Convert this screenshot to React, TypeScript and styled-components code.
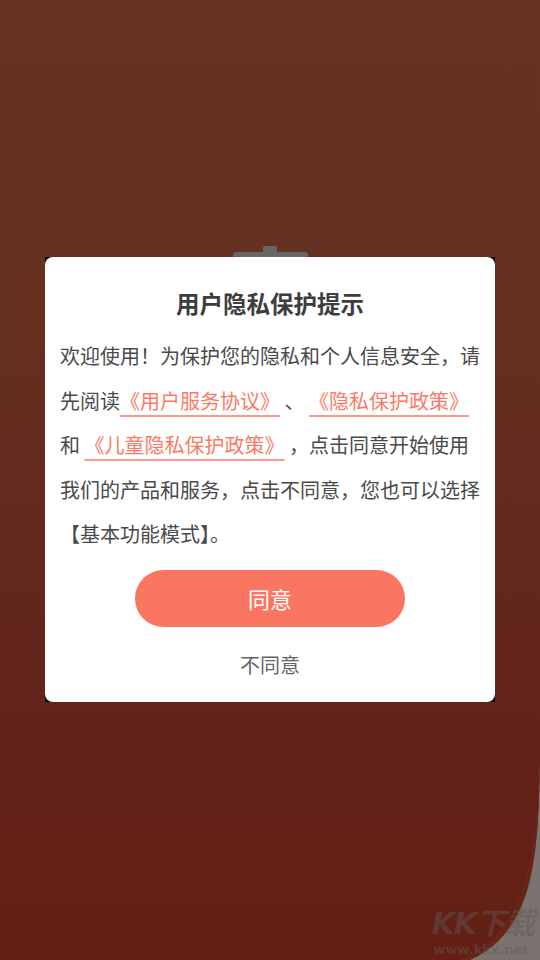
import React from "react";
import styled, { createGlobalStyle } from "styled-components";

const Global = createGlobalStyle`
  html, body { margin: 0; padding: 0; }
  body {
    width: 540px;
    height: 960px;
    overflow: hidden;
    font-family: "Noto Sans CJK SC", "Noto Sans", sans-serif;
  }
`;

const Page = styled.div`
  position: relative;
  width: 540px;
  height: 960px;
  box-sizing: border-box;
  padding-top: 257px;
  background: linear-gradient(180deg, #653222 0%, #643020 35%, #63241a 70%, #631f14 100%);
  overflow: hidden;
`;

const DialogWrap = styled.div`
  position: relative;
  margin: 0 45px;
  width: 450px;
`;

const Tab = styled.div`
  position: absolute;
  left: 188px;
  top: -5px;
  width: 75px;
  height: 10px;
  border-radius: 3px 3px 0 0;
  background: #666666;
  &::before {
    content: "";
    position: absolute;
    left: 30px;
    top: -6px;
    width: 14px;
    height: 8px;
    border-radius: 2px 2px 0 0;
    background: #666666;
  }
`;

const DialogFrame = styled.div`
  position: relative;
  background: #000;
`;

const Dialog = styled.div`
  background: #ffffff;
  border-radius: 8px;
  padding: 30px 15px 22px;
  display: flex;
  flex-direction: column;
  align-items: center;
`;

const Title = styled.h1`
  margin: 0;
  font-size: 23.5px;
  line-height: 32px;
  font-weight: 700;
  color: #3d3d3d;
  text-align: center;
`;

const Body = styled.p`
  margin: 15px 0 0;
  width: 420px;
  font-size: 20px;
  line-height: 44.5px;
  color: #4a4a4a;
  text-align: left;
  word-break: break-all;
`;

const Link = styled.a`
  color: #fb7a66;
  text-decoration: underline;
  text-decoration-color: #fb9a8a;
  text-decoration-thickness: 2px;
  text-underline-offset: 6px;
  cursor: pointer;
`;

const AgreeButton = styled.button`
  margin-top: 13px;
  width: 270px;
  height: 57px;
  border: none;
  border-radius: 28.5px;
  background: #fb7661;
  color: #ffffff;
  font-family: "Noto Sans CJK SC", "Noto Sans", sans-serif;
  font-size: 22px;
  display: flex;
  align-items: center;
  justify-content: center;
  cursor: pointer;
`;

const DisagreeButton = styled.button`
  margin-top: 23px;
  border: none;
  background: transparent;
  padding: 0;
  color: #666666;
  font-family: "Noto Sans CJK SC", "Noto Sans", sans-serif;
  font-size: 20px;
  line-height: 30px;
  cursor: pointer;
`;

const Curl = styled.svg`
  position: absolute;
  right: 0;
  bottom: 0;
  width: 120px;
  height: 220px;
`;

const Watermark = styled.div`
  position: absolute;
  right: 6px;
  bottom: 2px;
  display: flex;
  flex-direction: column;
  align-items: flex-start;
  color: rgba(95, 88, 88, 0.45);
  font-family: "DejaVu Sans", "Noto Sans CJK SC", sans-serif;
  pointer-events: none;
`;

const WatermarkLogo = styled.span`
  font-size: 30px;
  font-weight: 700;
  line-height: 36px;
  letter-spacing: -1px;
  font-style: italic;
`;

const WatermarkUrl = styled.span`
  font-size: 13px;
  font-weight: 700;
  line-height: 16px;
  margin-left: 2px;
`;

export default function App() {
  return (
    <>
      <Global />
      <Page>
        <DialogWrap>
          <Tab />
          <DialogFrame>
            <Dialog>
              <Title>用户隐私保护提示</Title>
              <Body>
                欢迎使用！为保护您的隐私和个人信息安全，请先阅读
                <Link>《用户服务协议》</Link> 、 <Link>《隐私保护政策》</Link>
                和 <Link>《儿童隐私保护政策》</Link> ，点击同意开始使用我们的产品和服务，点击不同意，您也可以选择【基本功能模式】。
              </Body>
              <AgreeButton>同意</AgreeButton>
              <DisagreeButton>不同意</DisagreeButton>
            </Dialog>
          </DialogFrame>
        </DialogWrap>
        <Curl viewBox="0 0 120 220">
          <path d="M120 20 C118 120 114 190 50 220 L120 220 Z" fill="#7b7270" />
          <path d="M120 20 C118 120 114 190 50 220 L40 220 C104 192 112 130 120 40 Z" fill="#6a2618" opacity="0.7" />
        </Curl>
        <Watermark>
          <WatermarkLogo>KK下载</WatermarkLogo>
          <WatermarkUrl>www.kkx.net</WatermarkUrl>
        </Watermark>
      </Page>
    </>
  );
}
